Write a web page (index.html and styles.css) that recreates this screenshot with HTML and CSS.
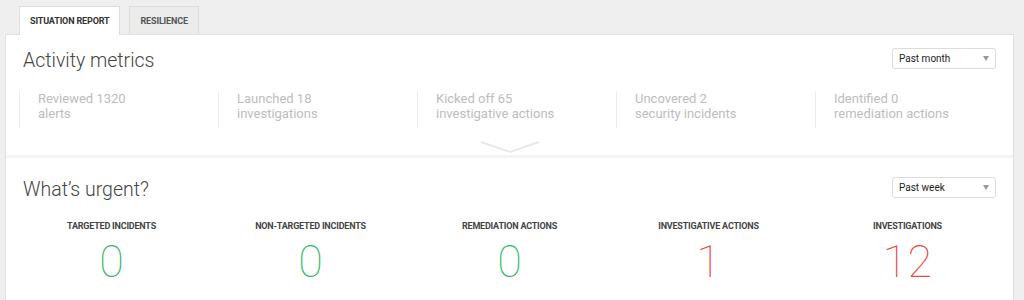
FILE: index.html
```html
<!DOCTYPE html>
<html>
<head>
<meta charset="utf-8">
<link rel="stylesheet" href="styles.css">
</head>
<body>
<div class="page">
  <div class="tabs">
    <div class="tab active">SITUATION REPORT</div>
    <div class="tab">RESILIENCE</div>
  </div>
  <div class="panel">
    <section class="activity">
      <div class="head">
        <h2 class="title">Activity metrics</h2>
        <div class="select"><span>Past month</span><span class="caret"></span></div>
      </div>
      <div class="metrics">
        <div class="metric">Reviewed 1320<br>alerts</div>
        <div class="metric">Launched 18<br>investigations</div>
        <div class="metric">Kicked off 65<br>investigative actions</div>
        <div class="metric">Uncovered 2<br>security incidents</div>
        <div class="metric">Identified 0<br>remediation actions</div>
      </div>
      <svg class="chevron" width="62" height="14" viewBox="0 0 62 14"><polyline points="2,2 31,12 60,2" fill="none" stroke="#e9e9e9" stroke-width="2"/></svg>
    </section>
    <section class="urgent">
      <div class="head">
        <h2 class="title">What’s urgent?</h2>
        <div class="select"><span>Past week</span><span class="caret"></span></div>
      </div>
      <div class="counts">
        <div class="count"><div class="label">TARGETED INCIDENTS</div><div class="num green">0</div></div>
        <div class="count"><div class="label">NON-TARGETED INCIDENTS</div><div class="num green">0</div></div>
        <div class="count"><div class="label">REMEDIATION ACTIONS</div><div class="num green">0</div></div>
        <div class="count"><div class="label">INVESTIGATIVE ACTIONS</div><div class="num red">1</div></div>
        <div class="count"><div class="label">INVESTIGATIONS</div><div class="num red">12</div></div>
      </div>
    </section>
  </div>
</div>
</body>
</html>
```
FILE: styles.css
```css
* { box-sizing: border-box; }
html, body { margin: 0; height: 100%; }
body {
  background: #efefef;
  font-family: Roboto, "Liberation Sans", sans-serif;
  overflow: hidden;
}
.page {
  padding: 6px 10px 0 5px;
}
.tabs {
  display: flex;
  gap: 9px;
  padding-left: 14px;
  height: 28px;
}
.tab {
  height: 28px;
  padding: 0 10px;
  display: flex;
  align-items: center;
  font-size: 9px;
  font-weight: 700;
  color: #555;
  letter-spacing: -0.15px;
  background: #ececec;
  border: 1px solid #dcdcdc;
  border-bottom: none;
}
.tab.active {
  background: #fff;
  color: #333;
  position: relative;
  z-index: 1;
  height: 29px;
  margin-bottom: -1px;
}
.panel {
  background: #fff;
  border: 1px solid #e0e0e0;
  border-bottom: none;
  height: 266px;
  overflow: hidden;
}
.head {
  display: flex;
  justify-content: space-between;
  align-items: flex-start;
  padding: 0 17px 0 17px;
}
.title {
  margin: 2px 0 0 0;
  font-size: 19.5px;
  font-weight: 300;
  line-height: 26px;
  color: #444;
}
.select {
  width: 104px;
  height: 21px;
  border: 1px solid #dcdcdc;
  border-radius: 3px;
  display: flex;
  align-items: center;
  justify-content: space-between;
  padding: 0 6px 0 6px;
  font-size: 10px;
  color: #222;
  margin-top: 2px;
}
.caret {
  width: 0; height: 0;
  border-left: 3px solid transparent;
  border-right: 3px solid transparent;
  border-top: 5px solid #999;
}
.activity {
  padding-top: 11px;
  border-bottom: 3px solid #f4f4f4;
  display: flex;
  flex-direction: column;
}
.metrics {
  display: grid;
  grid-template-columns: repeat(5, 199px);
  margin: 17px 0 0 13px;
}
.metric {
  border-left: 1px solid #ececec;
  padding: 0 0 8px 18px;
  height: 37px;
  font-size: 13px;
  line-height: 15px;
  color: #bdbdbd;
}
.chevron {
  display: block;
  align-self: center;
  margin: 12px 0 1px 0;
}
.urgent {
  padding-top: 17px;
}
.counts {
  display: grid;
  grid-template-columns: repeat(5, 199px);
  margin: 17px 0 0 6px;
}
.count {
  display: flex;
  flex-direction: column;
  align-items: center;
}
.label {
  font-size: 9px;
  font-weight: 700;
  line-height: 12px;
  color: #444;
  letter-spacing: -0.2px;
}
.num {
  margin-top: 7px;
  font-size: 45px;
  line-height: 46px;
  font-weight: 100;
}
.green { color: #34b866; }
.red { color: #e8484a; }
```
